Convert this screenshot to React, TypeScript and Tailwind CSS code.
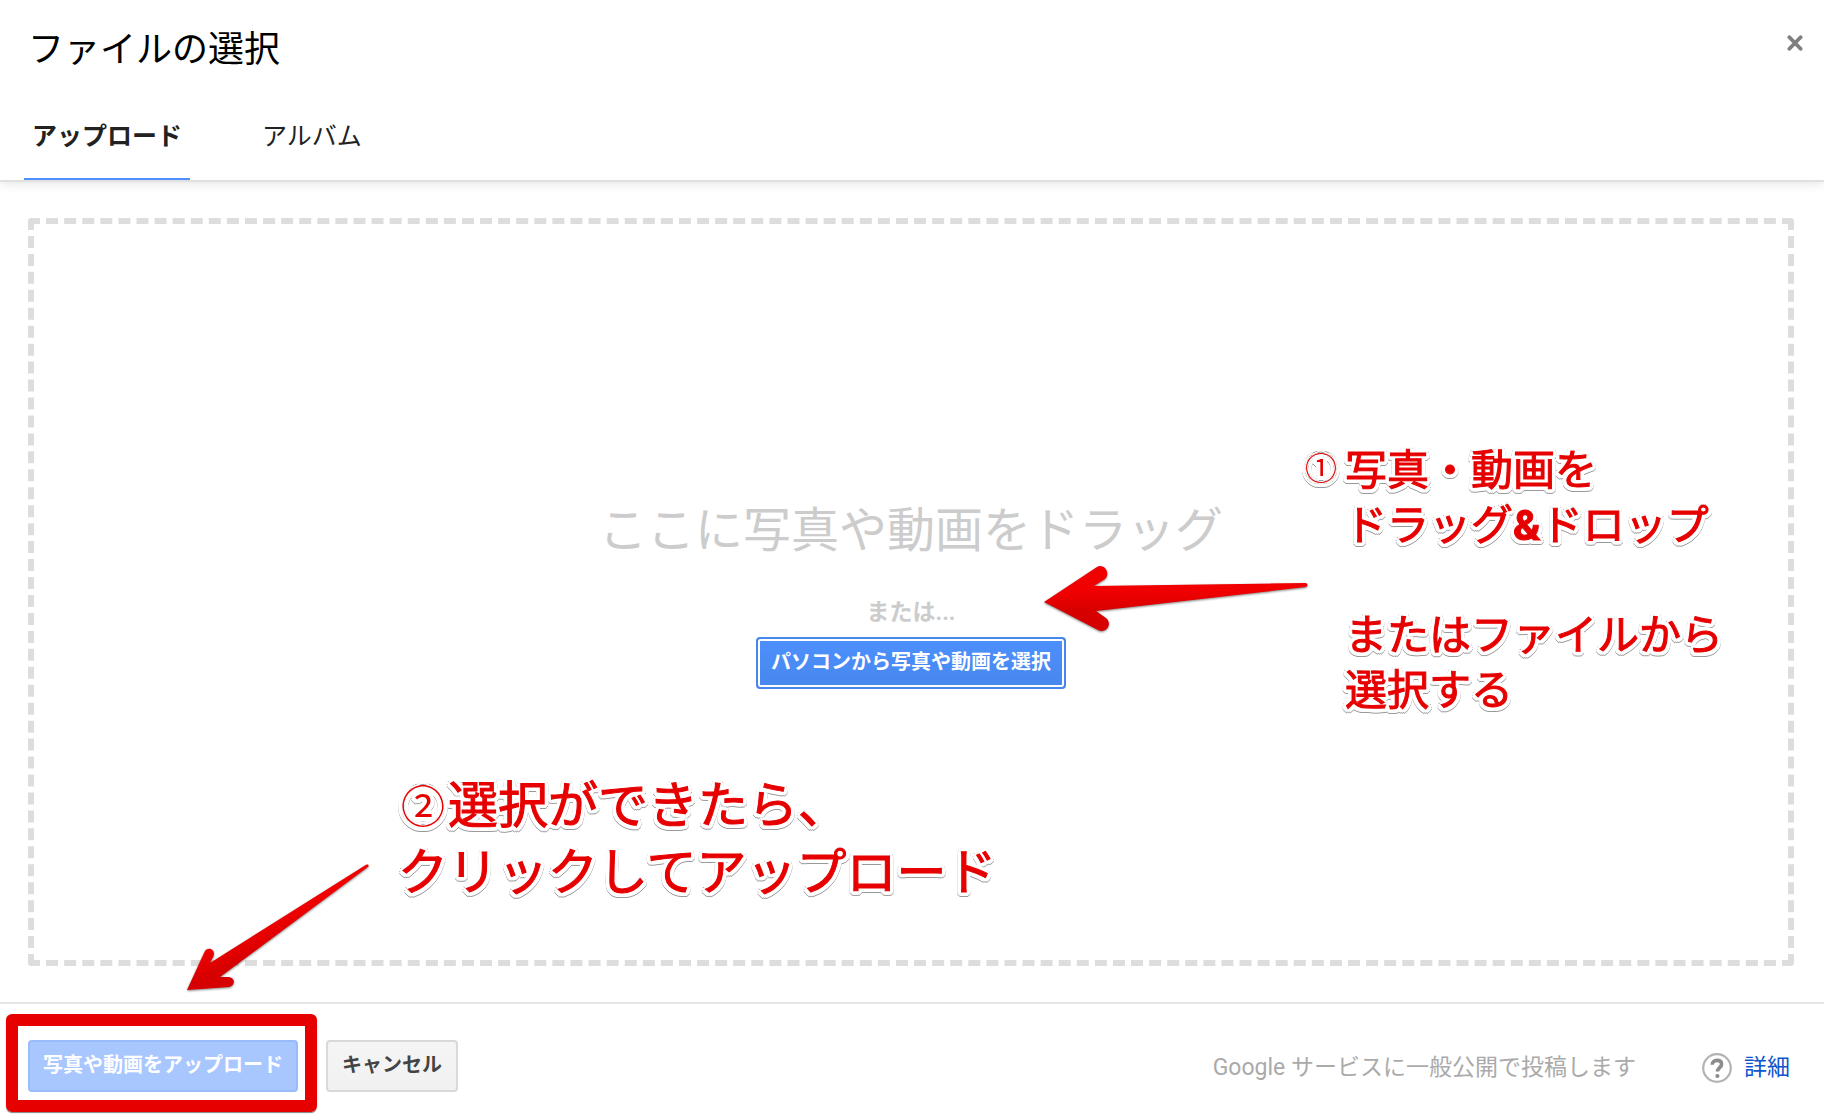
import React, { useState } from "react";

const tabs = [
  { id: "upload", title: "アップロード" },
  { id: "album", title: "アルバム" },
];

// red notes with a white outline and a thin grey edge below
const noteStyle =
  "absolute text-[#e60000] whitespace-nowrap pointer-events-none [-webkit-text-stroke:1px_#e60000] [text-shadow:4px_0_white,-4px_0_white,0_4px_white,0_-4px_white,3px_3px_white,-3px_3px_white,3px_-3px_white,-3px_-3px_white,2px_4px_white,-2px_4px_white,4px_2px_white,-4px_2px_white] [filter:drop-shadow(0_1px_0_#999)]";

const CloseIcon = () => (
  <svg width="16" height="16" viewBox="0 0 16 16" aria-hidden="true">
    <path
      d="M2.4 2.2L13.6 13.8M13.6 2.2L2.4 13.8"
      stroke="#7f7f7f"
      strokeWidth="3.8"
      strokeLinecap="round"
    />
  </svg>
);

const HelpIcon = () => (
  <svg width="30" height="30" viewBox="0 0 30 30" fill="none" aria-hidden="true">
    <circle cx="15" cy="15" r="13.8" stroke="#b3b3b3" strokeWidth="2.2" />
    <path
      d="M10.2 11.8C10.2 9 12.2 7.4 15 7.4C17.8 7.4 19.6 8.9 19.6 11.3C19.6 14.6 15.4 14.6 15.4 18.6"
      stroke="#8c8c8c"
      strokeWidth="3.6"
    />
    <circle cx="15.4" cy="23" r="2.1" fill="#8c8c8c" />
  </svg>
);

const ArrowLeft = () => (
  <svg
    className="absolute left-1/2 top-[566px] ml-[132px] drop-shadow-[0_1px_1px_rgba(0,0,0,0.5)] pointer-events-none"
    width="265"
    height="68"
    viewBox="0 0 265 68"
    aria-hidden="true"
  >
    <defs>
      <linearGradient id="redLeft" x1="0" y1="0" x2="0" y2="1">
        <stop offset="0.4" stopColor="#f00000" />
        <stop offset="0.7" stopColor="#d60000" />
      </linearGradient>
    </defs>
    <path
      d="M0 36L53 1C60 -3 67 7 61 13L50 20L262 17Q265 19 262 21L52 45L62 52C69 58 62 68 54 64Z"
      fill="url(#redLeft)"
    />
  </svg>
);

const ArrowDown = () => (
  <svg
    className="absolute left-[187px] top-[864px] drop-shadow-[0_1px_1px_rgba(0,0,0,0.5)] pointer-events-none"
    width="182"
    height="127"
    viewBox="0 0 182 127"
    aria-hidden="true"
  >
    <defs>
      <linearGradient id="redDown" x1="0.4" y1="0.4" x2="0.6" y2="0.7">
        <stop offset="0.2" stopColor="#f00000" />
        <stop offset="0.7" stopColor="#d60000" />
      </linearGradient>
    </defs>
    <path
      d="M0 126L17.5 88C20 82 29 85 26.5 92L23 99L179.5 0.5Q182 0 181.5 2.5L33 113L42 113C49 114 48 122 42 123Z"
      fill="url(#redDown)"
    />
  </svg>
);

const App = () => {
  const [active, setActive] = useState("upload");

  return (
    <div className="relative min-h-screen flex flex-col overflow-hidden bg-white font-['Roboto','Noto_Sans_CJK_JP',sans-serif]">
      <header className="relative shadow-[0_2px_0_#e0e0e0,0_2px_12px_rgba(0,0,0,0.14)]">
        <div className="flex items-start justify-between pl-7 pr-[21px] pt-[26px]">
          <h1 className="text-4xl leading-[48px] text-black">ファイルの選択</h1>
          <button type="button" aria-label="閉じる" className="mt-[9px]">
            <CloseIcon />
          </button>
        </div>
        <nav className="flex gap-16 px-6 pt-[22px]">
          {tabs.map((tab) => (
            <button
              type="button"
              key={tab.id}
              onClick={() => setActive(tab.id)}
              className={
                active === tab.id
                  ? "h-[84px] px-2 text-[25px] text-[#222] font-bold border-b-2 border-[#4d90fe]"
                  : "h-[84px] px-2 text-[25px] text-[#222] border-b-2 border-transparent"
              }
            >
              {tab.title}
            </button>
          ))}
        </nav>
      </header>

      <main className="flex-1 flex pt-[38px] pb-9 pl-7 pr-[30px]">
        <div className="flex-1 flex flex-col items-center justify-center border-6 border-dashed border-[#ddd] rounded-sm">
          <p className="text-5xl leading-[72px] text-[#ccc]">ここに写真や動画をドラッグ</p>
          <p className="mt-8 text-[23px] leading-[28px] font-bold text-[#ccc]">または...</p>
          <button
            type="button"
            className="mt-[10px] h-[52px] px-[13px] pb-[2px] rounded-sm border-2 border-[#4787ed] bg-linear-to-b from-[#4d90fe] to-[#4787ed] text-xl font-bold text-white shadow-[inset_0_0_0_2px_white]"
          >
            パソコンから写真や動画を選択
          </button>
        </div>
      </main>

      <footer className="flex items-center justify-between h-[118px] pt-2 pl-7 pr-[34px] border-t-2 border-[#e5e5e5]">
        <div className="flex gap-7">
          <div className="relative">
            <button
              type="button"
              className="h-[52px] px-[13px] pb-[2px] rounded-sm border-2 border-[#98bbf9] bg-[#a8c7ff] text-xl font-bold text-white"
            >
              写真や動画をアップロード
            </button>
            <div className="absolute -left-[22px] -right-[19px] -top-[26px] -bottom-5 border-12 border-[#e60000] rounded-md shadow-[0_1px_1px_rgba(0,0,0,0.5)] pointer-events-none" />
          </div>
          <button
            type="button"
            className="h-[52px] px-[14px] pb-[2px] rounded-sm border-2 border-[#d9d9d9] bg-linear-to-b from-[#f5f5f5] to-[#f1f1f1] text-xl font-bold text-[#444]"
          >
            キャンセル
          </button>
        </div>
        <div className="flex items-center pt-1 text-[23px]">
          <span className="text-[#aaa]">Google サービスに一般公開で投稿します</span>
          <a href="#" className="ml-[66px] flex items-center gap-3 text-[#1155cc]">
            <HelpIcon />
            詳細
          </a>
        </div>
      </footer>

      {/* step 1 */}
      <div className={`${noteStyle} left-1/2 top-[443px] ml-[393px] flex`}>
        <span className="w-10 text-[32px] leading-[52px] [-webkit-text-stroke:0]">①</span>
        <p className="text-[42px] leading-[55px]">
          写真・動画を
          <br />
          ドラッグ<b>&amp;</b>ドロップ
          <br />
          <br />
          またはファイルから
          <br />
          選択する
        </p>
      </div>
      <ArrowLeft />

      {/* step 2 */}
      <p className={`${noteStyle} left-[398px] top-[774px] text-[50px] leading-[65px]`}>
        <span className="inline-block w-[50px] text-center text-[44px] [-webkit-text-stroke:0]">②</span>
        選択ができたら、
        <br />
        クリックしてアップロード
      </p>
      <ArrowDown />
    </div>
  );
};

export default App;
